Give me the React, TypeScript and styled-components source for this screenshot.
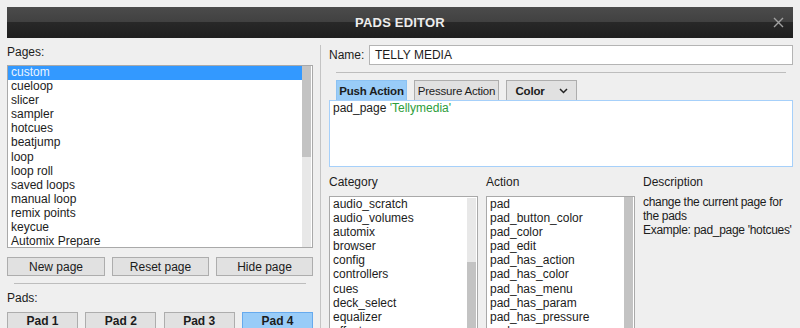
import { styled, createGlobalStyle } from "styled-components";

const GlobalStyle = createGlobalStyle`
  html, body {
    margin: 0;
    padding: 0;
    background: #ececec;
  }
  body {
    font-family: "Liberation Sans", Arial, sans-serif;
    font-size: 12px;
    color: #1c1c1c;
  }
`;

const Window = styled.div`
  width: 800px;
  height: 328px;
  overflow: hidden;
  box-sizing: border-box;
  padding: 7px 7px 0 7px;
  background: #efefef;
  display: flex;
  flex-direction: column;
`;

const TitleBar = styled.div`
  height: 31px;
  flex-shrink: 0;
  position: relative;
  display: flex;
  align-items: center;
  justify-content: center;
  background: linear-gradient(#4b4b4b 0, #414141 48%, #282828 50%, #1f1f1f 100%);
`;

const Title = styled.div`
  color: #ececec;
  font-weight: bold;
  font-size: 13px;
  letter-spacing: 0.2px;
`;

const CloseBtn = styled.div`
  position: absolute;
  right: 8px;
  top: 9px;
  width: 13px;
  height: 13px;
`;

const Body = styled.div`
  display: flex;
  flex: 1;
`;

const LeftCol = styled.div`
  width: 306px;
  flex-shrink: 0;
  padding-top: 7px;
  display: flex;
  flex-direction: column;
`;

const Divider = styled.div`
  width: 1px;
  flex-shrink: 0;
  background: #c4c4c4;
  margin: 7px 8px 0 7px;
`;

const RightCol = styled.div`
  flex: 1;
  min-width: 0;
  padding-top: 7px;
  display: flex;
  flex-direction: column;
`;

const Label = styled.div<{ $mt?: number }>`
  height: 14px;
  line-height: 14px;
  margin-top: ${(p) => p.$mt ?? 0}px;
`;

const ListBox = styled.div<{ $h?: number; $mt?: number }>`
  display: flex;
  box-sizing: border-box;
  border: 1px solid #a9a9a9;
  background: #fff;
  margin-top: ${(p) => p.$mt ?? 0}px;
  height: ${(p) => (p.$h ? `${p.$h}px` : "auto")};
  flex: ${(p) => (p.$h ? "none" : "1")};
  overflow: hidden;
`;

const Items = styled.div`
  flex: 1;
  display: flex;
  flex-direction: column;
`;

const Item = styled.div<{ $sel?: boolean }>`
  height: 14.1px;
  line-height: 13px;
  padding-left: 3px;
  white-space: nowrap;
  overflow: hidden;
  background: ${(p) => (p.$sel ? "#3399ff" : "transparent")};
  color: ${(p) => (p.$sel ? "#eaf4ff" : "#1c1c1c")};
  flex-shrink: 0;
`;

const Track = styled.div`
  width: 9px;
  margin: 0 1px 0 0;
  background: #e8e8e8;
  display: flex;
  flex-direction: column;
`;

const Thumb = styled.div<{ $top: number; $h: number | string }>`
  margin-top: ${(p) => p.$top}px;
  height: ${(p) => (typeof p.$h === "number" ? `${p.$h}px` : p.$h)};
  flex: ${(p) => (typeof p.$h === "number" ? "none" : "1")};
  background: #c3c3c3;
`;

const ButtonRow = styled.div`
  display: flex;
  justify-content: space-between;
  margin-top: 9px;
`;

const Button = styled.div<{ $w: number }>`
  width: ${(p) => p.$w}px;
  height: 19px;
  box-sizing: border-box;
  border: 1px solid #adadad;
  background: #e1e1e1;
  display: flex;
  align-items: center;
  justify-content: center;
`;

const HLine = styled.div<{ $mt: number; $mx: number }>`
  height: 1px;
  background: #bdbdbd;
  margin: ${(p) => p.$mt}px ${(p) => p.$mx}px 0;
`;

const PadRow = styled.div`
  display: flex;
  justify-content: space-between;
  margin-top: 7px;
`;

const PadButton = styled.div<{ $active?: boolean }>`
  width: 71px;
  height: 22px;
  box-sizing: border-box;
  border: 1px solid ${(p) => (p.$active ? "#66aaee" : "#adadad")};
  background: ${(p) => (p.$active ? "#99ccf8" : "#e1e1e1")};
  font-weight: bold;
  display: flex;
  justify-content: center;
  padding-top: 1px;
`;

const NameRow = styled.div`
  display: flex;
  align-items: center;
  height: 20px;
`;

const NameLabel = styled.div`
  width: 40px;
`;

const NameInput = styled.div`
  flex: 1;
  height: 20px;
  box-sizing: border-box;
  border: 1px solid #b4b4b4;
  background: #fff;
  padding-left: 5px;
  line-height: 18px;
`;

const Tabs = styled.div`
  display: flex;
  gap: 7px;
  margin: 7px 0 0 7px;
`;

const Tab = styled.div<{ $active?: boolean; $bold?: boolean; $w: number }>`
  width: ${(p) => p.$w}px;
  height: 20px;
  box-sizing: border-box;
  border: 1px solid ${(p) => (p.$active ? "#8cc2f2" : "#adadad")};
  border-bottom: none;
  background: ${(p) => (p.$active ? "#99ccf8" : "#e1e1e1")};
  font-weight: ${(p) => (p.$bold ? "bold" : "normal")};
  font-size: 11.5px;
  letter-spacing: -0.2px;
  white-space: nowrap;
  display: flex;
  align-items: center;
  justify-content: center;
  gap: 14px;
`;

const Editor = styled.div`
  height: 67px;
  box-sizing: border-box;
  border: 1px solid #a6d0fa;
  background: #fff;
  padding: 0 3px;
  line-height: 14px;
`;

const Str = styled.span`
  color: #2d9e3a;
`;

const Columns = styled.div`
  display: flex;
  gap: 8px;
  margin-top: 8px;
  flex: 1;
`;

const Column = styled.div<{ $w?: number }>`
  width: ${(p) => (p.$w ? `${p.$w}px` : "auto")};
  flex: ${(p) => (p.$w ? "none" : "1")};
  min-width: 0;
  display: flex;
  flex-direction: column;
`;

const ColList = styled(ListBox)`
  margin-top: 7px;
  padding-top: 1px;
`;

const DescText = styled.div`
  margin-top: 6px;
  line-height: 14px;
  white-space: nowrap;
  letter-spacing: -0.3px;
`;

const Chevron = () => (
  <svg width="9" height="6" viewBox="0 0 9 6">
    <polyline points="1,1 4.5,4.5 8,1" fill="none" stroke="#222" strokeWidth="1.5" />
  </svg>
);

const pages = [
  "custom",
  "cueloop",
  "slicer",
  "sampler",
  "hotcues",
  "beatjump",
  "loop",
  "loop roll",
  "saved loops",
  "manual loop",
  "remix points",
  "keycue",
  "Automix Prepare",
];

const categories = [
  "audio_scratch",
  "audio_volumes",
  "automix",
  "browser",
  "config",
  "controllers",
  "cues",
  "deck_select",
  "equalizer",
  "effects",
];

const actions = [
  "pad",
  "pad_button_color",
  "pad_color",
  "pad_edit",
  "pad_has_action",
  "pad_has_color",
  "pad_has_menu",
  "pad_has_param",
  "pad_has_pressure",
  "pad_page",
];

export default function App() {
  return (
    <>
      <GlobalStyle />
      <Window>
        <TitleBar>
          <Title>PADS EDITOR</Title>
          <CloseBtn>
            <svg width="13" height="13" viewBox="0 0 13 13">
              <path d="M2 2 L11 11 M11 2 L2 11" stroke="#a0a0a0" strokeWidth="1.4" />
            </svg>
          </CloseBtn>
        </TitleBar>
        <Body>
          <LeftCol>
            <Label>Pages:</Label>
            <ListBox $h={183} $mt={6}>
              <Items>
                {pages.map((p, i) => (
                  <Item key={p} $sel={i === 0}>
                    {p}
                  </Item>
                ))}
              </Items>
              <Track>
                <Thumb $top={0} $h={91} />
              </Track>
            </ListBox>
            <ButtonRow>
              <Button $w={98}>New page</Button>
              <Button $w={97}>Reset page</Button>
              <Button $w={97}>Hide page</Button>
            </ButtonRow>
            <HLine $mt={7} $mx={7} />
            <Label $mt={7}>Pads:</Label>
            <PadRow>
              {[1, 2, 3, 4].map((n) => (
                <PadButton key={n} $active={n === 4}>
                  Pad {n}
                </PadButton>
              ))}
            </PadRow>
          </LeftCol>
          <Divider />
          <RightCol>
            <NameRow>
              <NameLabel>Name:</NameLabel>
              <NameInput>TELLY MEDIA</NameInput>
            </NameRow>
            <HLine $mt={7} $mx={7} />
            <Tabs>
              <Tab $active $bold $w={71}>
                Push Action
              </Tab>
              <Tab $w={85}>Pressure Action</Tab>
              <Tab $bold $w={71}>
                Color <Chevron />
              </Tab>
            </Tabs>
            <Editor>
              pad_page <Str>'Tellymedia'</Str>
            </Editor>
            <Columns>
              <Column $w={149}>
                <Label>Category</Label>
                <ColList>
                  <Items>
                    {categories.map((c) => (
                      <Item key={c}>{c}</Item>
                    ))}
                  </Items>
                  <Track>
                    <Thumb $top={64} $h="fill" />
                  </Track>
                </ColList>
              </Column>
              <Column $w={149}>
                <Label>Action</Label>
                <ColList>
                  <Items>
                    {actions.map((a) => (
                      <Item key={a}>{a}</Item>
                    ))}
                  </Items>
                  <Track>
                    <Thumb $top={-1} $h="fill" />
                  </Track>
                </ColList>
              </Column>
              <Column>
                <Label>Description</Label>
                <DescText>
                  change the current page for
                  <br />
                  the pads
                  <br />
                  Example: pad_page 'hotcues'
                </DescText>
              </Column>
            </Columns>
          </RightCol>
        </Body>
      </Window>
    </>
  );
}
